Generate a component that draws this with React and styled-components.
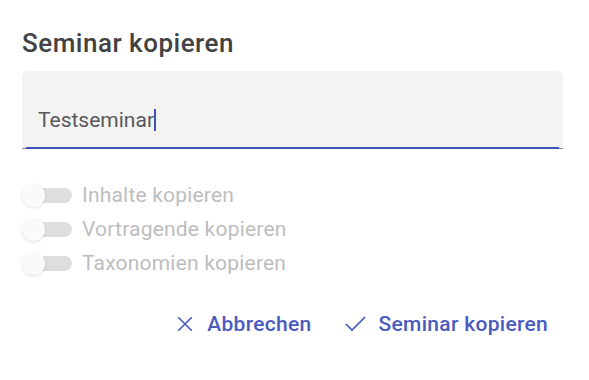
import React from "react"
import styled, { createGlobalStyle } from "styled-components"

const GlobalStyle = createGlobalStyle`
  html, body {
    margin: 0;
    padding: 0;
    background: #ffffff;
    font-family: Roboto, "Liberation Sans", sans-serif;
  }
`

const Dialog = styled.div`
  width: 589px;
  height: 380px;
  box-sizing: border-box;
  padding: 27px 26px 0 22px;
  background: #ffffff;
`

const Title = styled.h2`
  margin: 0 0 12px;
  font-size: 26px;
  font-weight: 500;
  letter-spacing: 0.5px;
  color: #424242;
  line-height: 32px;
`

const Field = styled.div`
  position: relative;
  height: 78px;
  background: #f3f3f3;
  border-radius: 6px 6px 0 0;
  display: flex;
  align-items: center;
  padding: 0 16px;
  border-bottom: 1px solid #8a8a8a;
  box-sizing: border-box;

  &::after {
    content: "";
    position: absolute;
    left: 4px;
    right: 4px;
    bottom: -1px;
    height: 2px;
    background: #3f51b5;
  }
`

const Value = styled.span`
  font-size: 21px;
  color: #585858;
  padding-top: 20px;
`

const Caret = styled.span`
  display: inline-block;
  width: 2px;
  height: 22px;
  background: #3f51b5;
  vertical-align: -4px;
`

const Switches = styled.div`
  display: flex;
  flex-direction: column;
  gap: 12px;
  margin-top: 35px;
`

const SwitchRow = styled.div`
  display: flex;
  align-items: center;
  gap: 10px;
  height: 22px;
`

const Track = styled.div`
  position: relative;
  width: 46px;
  height: 15px;
  border-radius: 8px;
  background: #dedede;
  margin-left: 4px;
`

const Thumb = styled.div`
  position: absolute;
  left: -4px;
  top: -4px;
  width: 23px;
  height: 23px;
  border-radius: 50%;
  background: #fafafa;
  box-shadow: 0 1px 3px rgba(0, 0, 0, 0.12);
`

const Label = styled.span`
  font-size: 21px;
  letter-spacing: 0.2px;
  color: #bdbdbd;
`

const Actions = styled.div`
  display: flex;
  justify-content: flex-end;
  gap: 33px;
  margin-top: 38px;
  padding-right: 15px;
`

const ActionButton = styled.button`
  display: flex;
  align-items: center;
  gap: 13px;
  border: 0;
  background: none;
  padding: 0;
  font-family: Roboto, "Liberation Sans", sans-serif;
  font-size: 21px;
  font-weight: 500;
  letter-spacing: 0.3px;
  color: #4a5bbf;
  cursor: pointer;
`

const CloseIcon = () => (
  <svg width="18" height="18" viewBox="0 0 24 24">
    <path d="M3 3 L21 21 M21 3 L3 21" stroke="#4a5bbf" strokeWidth="2.3" fill="none" />
  </svg>
)

const CheckIcon = () => (
  <svg width="21" height="18" viewBox="0 0 24 20">
    <path d="M1 10 L8 17 L23 2" stroke="#4a5bbf" strokeWidth="2" fill="none" />
  </svg>
)

const options = ["Inhalte kopieren", "Vortragende kopieren", "Taxonomien kopieren"]

export default function App() {
  return (
    <>
      <GlobalStyle />
      <Dialog>
        <Title>Seminar kopieren</Title>
        <Field>
          <Value>
            Testseminar
            <Caret />
          </Value>
        </Field>
        <Switches>
          {options.map(option => (
            <SwitchRow key={option}>
              <Track>
                <Thumb />
              </Track>
              <Label>{option}</Label>
            </SwitchRow>
          ))}
        </Switches>
        <Actions>
          <ActionButton>
            <CloseIcon />
            Abbrechen
          </ActionButton>
          <ActionButton>
            <CheckIcon />
            Seminar kopieren
          </ActionButton>
        </Actions>
      </Dialog>
    </>
  )
}
